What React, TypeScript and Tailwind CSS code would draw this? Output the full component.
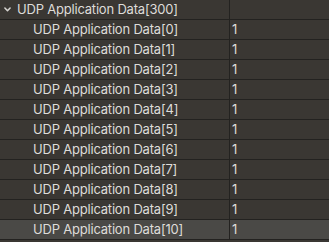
import React from "react";

const rows = Array.from({ length: 11 }, (_, i) => i);

const Chevron: React.FC = () => (
  <svg width="7" height="5" viewBox="0 0 7 5" className="shrink-0">
    <path d="M0.9 1 L3.5 3.8 L6.1 1" fill="none" stroke="#d6d4d1" strokeWidth="1.5" strokeLinecap="round" strokeLinejoin="round" />
  </svg>
);

const App: React.FC = () => {
  return (
    <div className="w-[329px] h-[242px] bg-[#3a3733] overflow-hidden text-[13px] tracking-[-0.2px] text-[#dedcd9] font-['Inter','Liberation_Sans',sans-serif]">
      <div className="flex h-[20px] border-b border-[#232220]">
        <div className="w-[230px] flex items-center pl-[4px] border-r border-[#232220]">
          <Chevron />
          <span className="leading-none ml-[6px]">UDP Application Data[300]</span>
        </div>
        <div className="flex-1"></div>
      </div>
      {rows.map(i => (
        <div
          key={i}
          className={`flex h-[20px] border-b border-[#232220] ${i === 10 ? "bg-[#4a4946]" : ""}`}
        >
          <div className="w-[230px] flex items-center pl-[33px] border-r border-[#232220]">
            <span className="leading-none">UDP Application Data[{i}]</span>
          </div>
          <div className="flex-1 flex items-center pl-[2px]">
            <span className="leading-none">1</span>
          </div>
        </div>
      ))}
    </div>
  );
};

export default App;
